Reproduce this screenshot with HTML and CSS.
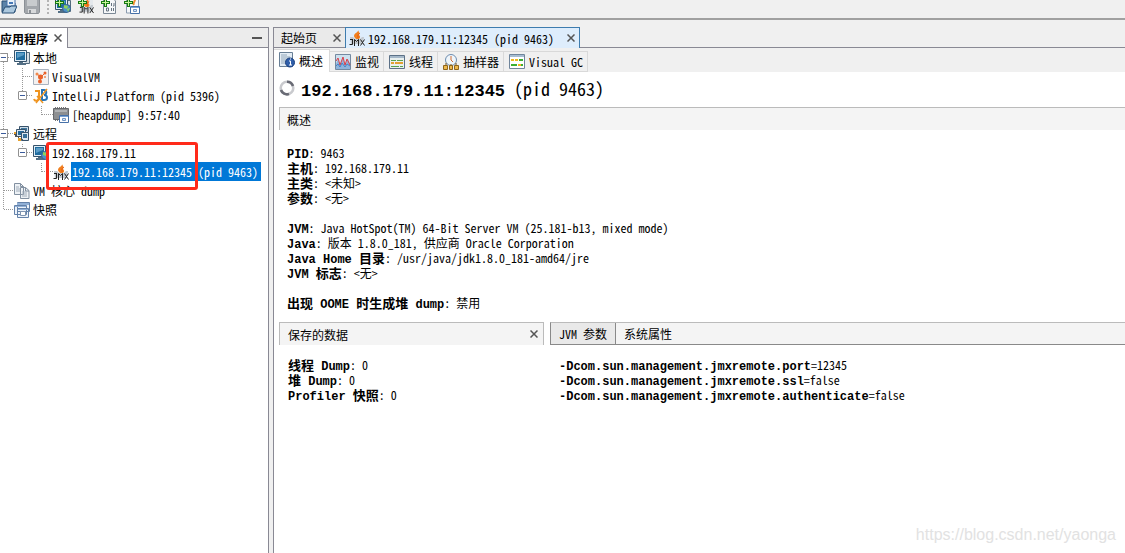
FILE: index.html
```html
<!DOCTYPE html>
<html lang="zh-CN">
<head>
<meta charset="utf-8">
<title>VisualVM</title>
<link rel="stylesheet" href="styles.css">
</head>
<body>
<svg class="defs" aria-hidden="true">
  <symbol id="plus" viewBox="0 0 9 9"><path d="M3 0h3v3h3v3H6v3H3V6H0V3h3z" fill="#167a13"/><path d="M4 1h1v3h3v1H5v3H4V5H1V4h3z" fill="#c8f59a"/></symbol>
  <symbol id="jmx" viewBox="0 0 16 16">
    <path d="M9 0c1 2-4 3-4 6 0 1 1 2 2 3h3c2-2 1-3 0-4 1-1 0-3-1-5z" fill="#f08020"/><path d="M11 3C8 5 9 6 9 8" stroke="#e85a10" fill="none"/>
    <path d="M1 7h3l2 2h5l2-2h2l-1 7H2z" fill="#c3c9cf"/>
    <path d="M.5 14.500h3V9M5.500 16V9.500l2 2 2-2V16M11.500 9.500l4 6m0-6l-4 6M1 9.500h2" stroke="#222" stroke-width="1" fill="none"/>
  </symbol>
  <symbol id="monitor" viewBox="0 0 16 16">
    <path d="M11.500 2.500h4v11h-5" fill="#d5dde4" stroke="#526a7d"/><path d="M.5.500h12v11H.5z" fill="#e1edf6" stroke="#36536b"/>
    <path d="M2 2h9v8H2z" fill="#1f6c9f"/><path d="M3 3h7v2L3 8z" fill="#5b9cc6"/><path d="M5 12h4v1h3v2H3v-2h2z" fill="#536f85"/>
  </symbol>
  <symbol id="globe" viewBox="0 0 9 9"><circle cx="4.500" cy="4.500" r="4" fill="#4e91c8" stroke="#39628a"/><path d="M2 1l4 1-1 3-3-1zM5 5l3-1-2 4z" fill="#8ed45b"/></symbol>
  <symbol id="window" viewBox="0 0 10 8"><path d="M.5.500h9v7h-9z" fill="#fff" stroke="#4771a8"/><path d="M1 1h8v1H1z" fill="#7ba4d5"/><path d="M3.500 3.500h3v2h-3z" fill="#dce9f8" stroke="#7194c3"/></symbol>
  <symbol id="remote" viewBox="0 0 16 16">
    <path d="M5.500.500h9v6h-9z" fill="#cddbe6" stroke="#38536b"/><path d="M7 2h6v3H7z" fill="#3d759c"/>
    <path d="M2.500 3.500h9v7h-9z" fill="#dce6ee" stroke="#38536b"/><path d="M4 5h6v4H4z" fill="#286b9a"/>
    <path d="M7.500 6.500h7v8h-7z" fill="#dce6ee" stroke="#38536b"/><path d="M9 8h4v4H9z" fill="#356f98"/><path d="M0 7h2v3h3v3h4v1H4v-3H1V9H0z" fill="#555"/><path d="M0 6h2v2H0zM4 12h3v3H4z" fill="#e6a02c"/>
  </symbol>
  <symbol id="docs" viewBox="0 0 16 16"><path d="M.5.500h6l3 3v8h-9zM6.500 4.500h5l3.500 3v8H6.500z" fill="#edf1f5" stroke="#8290a0"/><path d="M6.500.500v3h3M11.500 4.500v3.500H15" fill="none" stroke="#8290a0"/><path d="M2 4h3M2 6h4M2 8h4M8 9h5M8 11h5M8 13h5" stroke="#a1adba"/></symbol>
  <symbol id="snaps" viewBox="0 0 16 16"><path d="M3.500.500h12v9h-12zM.5 3.500h12v9H.500zM3.500 6.500h11v9h-11z" fill="#edf3fa" stroke="#6482aa"/><path d="M3 1h12v2H3zM1 4h11v1H1zM4 7h10v1H4z" fill="#91b0d6"/><path d="M6.500 9.500h5v4h-5z" fill="#fff" stroke="#7f94b0"/></symbol>
  <symbol id="chip" viewBox="0 0 16 16"><path d="M2.500 0v14M4.500 0v14M6.500 0v14M8.500 0v14M10.500 0v14M12.500 0v14" stroke="#777"/><path d="M.5 1.500h15v11H.5z" fill="#8d8f91" stroke="#66686b"/><path d="M2 3h12v2H2z" fill="#b0b2b4"/><use href="#window" x="6" y="8" width="10" height="8"/></symbol>
</svg>

<div class="app">
  <header class="toolbar">
    <button aria-label="打开"><svg viewBox="0 2 16 14"><path d="M1 3h6l2 2h5v9H1z" fill="#5c83a8" stroke="#294f75"/><path d="M6 0h8v8H6z" fill="#e9f2fa" stroke="#4771a8"/><path d="M8 4h4v2H8z" fill="#4678b7"/><path d="M1 15l3-6h5l1-1h6l-3 7z" fill="#acc8de" stroke="#294f75"/></svg></button>
    <button aria-label="保存" disabled><svg viewBox="0 2 16 14"><path d="M.5 0h15v14l-1 1.500h-13l-1-1z" fill="#a3a7ac" stroke="#8b9096"/><path d="M3 1h10v7H3z" fill="#c8cbce"/><path d="M4 11h8v4H4z" fill="#d7d9db"/><path d="M5 12h2v3H5z" fill="#8b9096"/></svg></button>
    <span class="grip"></span>
    <button aria-label="添加远程主机"><svg viewBox="0 2 16 14"><use href="#monitor" width="16" height="16"/><use href="#globe" x="7" y="6" width="9" height="9"/><use href="#plus" y="0" width="9" height="9"/></svg></button>
    <button aria-label="添加 JMX 连接"><svg viewBox="0 2 16 14"><path d="M2 1h13v12H2z" fill="#e4e8ec"/><use href="#jmx" x="1" width="15" height="16"/><use href="#plus" width="9" height="9"/></svg></button>
    <button aria-label="添加核心 dump"><svg viewBox="0 2 16 14"><path d="M2.500 0h9l3 3v12.500h-12z" fill="#f5f7f9" stroke="#7c8996"/><path d="M10.500 5v3M13 5v3h-1M5.500 10v3h2v-3h-2M10.500 10v3M12.500 10v3" stroke="#667380" fill="none"/><use href="#plus" width="9" height="9"/></svg></button>
    <button aria-label="添加快照"><svg viewBox="0 2 16 14"><path d="M2.500 0h12v15h-12z" fill="#f4f7fa" stroke="#8a9bae"/><path d="M10 0c3 3-2 4 0 7" stroke="#ee8d2c" stroke-width="2" fill="none"/><use href="#window" x="6" y="8" width="10" height="8"/><use href="#plus" width="9" height="9"/></svg></button>
  </header>

  <div class="workspace">
    <aside class="sidebar">
      <div class="side-head">
        <div class="side-tab"><b>应用程序</b><button class="close" aria-label="关闭"><svg viewBox="0 0 8 8"><path d="M.5.500l7 7m0-7l-7 7"/></svg></button></div>
        <button class="minimize" aria-label="最小化"></button>
      </div>
      <div class="tree">
        <svg class="guides" viewBox="0 0 60 171" aria-hidden="true"><path d="M3.500 10v152M22.500 20v28M22.500 96v9M41.500 58v9M41.500 115v9M4 9.500h10M23 28.500h10M23 47.500h10M42 66.500h11M4 85.500h10M23 104.500h10M42 123.500h11M4 142.500h10M4 161.500h10"/></svg>
        <ul>
          <li><button class="fold" aria-label="折叠"></button><svg class="ico"><use href="#monitor"/></svg><span>本地</span></li>
          <li class="leaf1"><svg class="ico" viewBox="0 0 16 16"><path d="M.5.500h15v15H.5z" fill="#f4f1f0" stroke="#a9b3bf"/><path d="M4 5l4 3 4-4M8 8l-1 4" stroke="#e9622a" fill="none"/><circle cx="7.500" cy="8" r="2.500" fill="#e9622a"/><circle cx="4" cy="5" r="1.500" fill="#f08a50"/><circle cx="12" cy="4" r="1.500" fill="#e9622a"/><circle cx="7" cy="12.500" r="2" fill="#e9622a"/><circle cx="12" cy="8" r="1" fill="#f08a50"/></svg><span>VisualVM</span></li>
          <li class="level1"><button class="fold" aria-label="折叠"></button><svg class="ico" viewBox="0 0 16 16"><path d="M2 3h4v6c0 4-4 5-5 2" stroke="#ef9521" stroke-width="2" fill="none"/><path d="M9 2v10h2c4 0 4-5 0-5 3 0 3-5 0-5z" stroke="#2875b8" stroke-width="2" fill="none"/><path d="M3 15L14 1M4 8l6 7" stroke="#ef9521" stroke-width="1.500"/></svg><span>IntelliJ Platform (pid 5396)</span></li>
          <li class="leaf2"><svg class="ico"><use href="#chip"/></svg><span>[heapdump] 9:57:40</span></li>
          <li><button class="fold" aria-label="折叠"></button><svg class="ico"><use href="#remote"/></svg><span>远程</span></li>
          <li class="level1"><button class="fold" aria-label="折叠"></button><svg class="ico" viewBox="0 0 16 16"><use href="#monitor"/><use href="#globe" x="8" y="6" width="9" height="9"/></svg><span>192.168.179.11</span></li>
          <li class="leaf2"><svg class="ico"><use href="#jmx"/></svg><span class="selected">192.168.179.11:12345 (pid 9463)</span></li>
          <li class="leaf0"><svg class="ico"><use href="#docs"/></svg><span>VM 核心 dump</span></li>
          <li class="leaf0"><svg class="ico"><use href="#snaps"/></svg><span>快照</span></li>
        </ul>
        <div class="highlight"></div>
      </div>
    </aside>

    <main class="content">
      <nav class="doc-tabs">
        <div class="doc-tab"><span>起始页</span><button class="close" aria-label="关闭"><svg viewBox="0 0 8 8"><path d="M.5.500l7 7m0-7l-7 7"/></svg></button></div>
        <div class="doc-tab active"><svg class="ico"><use href="#jmx"/></svg><span>192.168.179.11:12345 (pid 9463)</span><button class="close" aria-label="关闭"><svg viewBox="0 0 8 8"><path d="M.5.500l7 7m0-7l-7 7"/></svg></button></div>
      </nav>
      <nav class="view-tabs">
        <button class="current"><svg class="ico" viewBox="0 0 16 16"><path d="M.5.500h13v14H.5z" fill="#e4edf5" stroke="#687f96"/><path d="M2 3h6M2 5h9M2 7h7M2 9h5M2 11h4" stroke="#91a6b9"/><circle cx="11" cy="10.500" r="4.500" fill="#305faa" stroke="#183e7d"/><path d="M10 9h1.500v4M10 13h3M11 7h1" stroke="#fff" fill="none"/></svg>概述</button>
        <button><svg class="ico" viewBox="0 0 16 16"><path d="M.5.500h15v15H.5z" fill="#cde1ef" stroke="#7489a0"/><path d="M1 10l2-5 2 6 3-7 2 7 3-6 2 5v5H1z" fill="#8fb4dc"/><path d="M1 7l2-3 2 7 3-8 2 8 2-6 3 6" stroke="#dc3e48" fill="none"/><path d="M1 12l2-2 2 3 2-4 3 4 2-3 3 2" stroke="#4b82c4" fill="none"/></svg>监视</button>
        <button><svg class="ico" viewBox="0 0 16 16"><path d="M.5 1.500h15v13H.5z" fill="#e9f0ef" stroke="#5c7187"/><path d="M1 2h14v2H1z" fill="#a5b8c9"/><path d="M2 6.500h5m1 0h6" stroke="#5aa34f"/><path d="M2 9h3m1 0h8" stroke="#e2a133" stroke-width="2"/><path d="M2 12.500h8m1 0h3" stroke="#5aa34f"/></svg>线程</button>
        <button><svg class="ico" viewBox="0 0 16 16"><circle cx="8" cy="6" r="5.500" fill="#eef5fb" stroke="#6d8cae"/><path d="M8 2v4l2 2" stroke="#d26c33" fill="none"/><path d="M8 10v2M3 12V9M13 12V9" stroke="#70511c"/><path d="M.5 11.500h4v4h-4zM6.500 11.500h3v4h-3zM11.500 11.500h4v4h-4z" fill="#edb84c" stroke="#8e651b"/></svg>抽样器</button>
        <button><svg class="ico" viewBox="0 0 16 16"><path d="M.5.500h15v14H.5z" fill="#fff" stroke="#70859b"/><path d="M1 1h14v2H1z" fill="#a6bdd2"/><path d="M2 6h3m1 0h3" stroke="#efb91f" stroke-width="2"/><path d="M10 6h4" stroke="#3caf32" stroke-width="2"/><path d="M2 11h6m4 0h2" stroke="#3caf32" stroke-width="2"/><path d="M9 11h3" stroke="#efb91f" stroke-width="2"/></svg>Visual GC</button>
      </nav>

      <div class="page">
        <h1><svg class="ico" viewBox="0 0 16 16"><circle cx="8" cy="8" r="6.300" fill="none" stroke="#c9cace" stroke-width="2.600"/><path d="M2 10A6.300 6.300 0 0 0 10 14M8 1.700A6.300 6.300 0 0 1 14 6" fill="none" stroke="#696b75" stroke-width="2.600"/></svg><span><b>192.168.179.11:12345</b> (pid 9463)</span></h1>
        <h2 class="bar">概述</h2>
        <div class="details">
          <p><b>PID</b>: 9463</p>
          <p><b class="zh">主机</b>: 192.168.179.11</p>
          <p><b class="zh">主类</b>: &lt;未知&gt;</p>
          <p><b class="zh">参数</b>: &lt;无&gt;</p>
          <p class="space"><b>JVM</b>: Java HotSpot(TM) 64-Bit Server VM (25.181-b13, mixed mode)</p>
          <p><b>Java</b>: 版本 1.8.0_181, 供应商 Oracle Corporation</p>
          <p><b>Java Home <span class="zh">目录</span></b>: /usr/java/jdk1.8.0_181-amd64/jre</p>
          <p><b>JVM <span class="zh">标志</span></b>: &lt;无&gt;</p>
          <p class="space"><b><span class="zh">出现</span> OOME <span class="zh">时生成堆</span> dump</b>: 禁用</p>
        </div>
        <div class="split">
          <section class="saved">
            <h2 class="bar">保存的数据<button class="close" aria-label="关闭"><svg viewBox="0 0 8 8"><path d="M.5.500l7 7m0-7l-7 7"/></svg></button></h2>
            <div class="lines">
              <p><b><span class="zh">线程</span> Dump</b>: 0</p>
              <p><b><span class="zh">堆</span> Dump</b>: 0</p>
              <p><b>Profiler <span class="zh">快照</span></b>: 0</p>
            </div>
          </section>
          <section class="jvm">
            <div class="bar tabs"><button class="on">JVM 参数</button><button>系统属性</button></div>
            <div class="lines">
              <p><b>-Dcom.sun.management.jmxremote.port</b>=12345</p>
              <p><b>-Dcom.sun.management.jmxremote.ssl</b>=false</p>
              <p><b>-Dcom.sun.management.jmxremote.authenticate</b>=false</p>
            </div>
          </section>
        </div>
      </div>
    </main>
  </div>
  <div class="watermark">https://blog.csdn.net/yaonga</div>
</div>
</body>
</html>
```
FILE: styles.css
```css
* { box-sizing: border-box; }
body, h1, h2, p, ul { margin: 0; padding: 0; }
body, button {
  font-family: "Noto Sans CJK SC", "Liberation Mono", monospace;
  font-size: 12px;
  line-height: 15px;
  font-feature-settings: "hwid";
  font-kerning: none;
  color: #000;
}
button { border: 0; padding: 0; background: none; }
.defs { position: absolute; width: 0; height: 0; }
.ico { width: 16px; height: 16px; flex: none; }
.app { position: relative; display: flex; flex-direction: column; min-height: 100vh; background: #f0f0f0; }

.toolbar { display: flex; gap: 7px; height: 20px; padding-left: 1px; border-bottom: 2px solid #a0a0a0; }
.toolbar button { height: 14px; }
.toolbar svg { display: block; width: 16px; height: 14px; }
.grip { width: 2px; height: 14px; margin: 0 -1px 0 0; border-left: 2px dotted #b4b4b4; }

.workspace { display: flex; flex: 1; gap: 4px; padding-top: 7px; }
.sidebar { display: flex; flex-direction: column; width: 269px; flex: none; background: #fff; border-right: 1px solid #898994; border-top: 1px solid #898994; }
.side-head { display: flex; justify-content: space-between; height: 20px; background: #ececec; }
.side-tab { display: flex; align-items: center; gap: 6px; padding-right: 5px; background: #fff; border-right: 1px solid #898994; }
.minimize { flex: 1; border-bottom: 1px solid #898994; display: flex; align-items: center; justify-content: flex-end; padding-right: 6px; }
.minimize::before { content: ""; width: 10px; height: 2px; background: #555; }
.close { display: flex; }
.close svg { width: 8px; height: 8px; stroke: #555; stroke-width: 1.5; fill: none; }

.tree { position: relative; }
.guides { position: absolute; left: 0; top: 0; width: 60px; height: 171px; fill: none; stroke: #999; stroke-dasharray: 1 1; }
.tree ul { position: relative; list-style: none; }
.tree li { display: flex; align-items: center; height: 19px; padding-left: 0; white-space: nowrap; }
.tree li.level1 { padding-left: 18px; }
.tree li.leaf0 { padding-left: 14px; }
.tree li.leaf1 { padding-left: 33px; }
.tree li.leaf2 { padding-left: 53px; }
.tree span { padding-left: 3px; line-height: 19px; }
.tree .selected { margin-left: 2px; padding: 0 3px 0 1px; background: #0078d7; color: #fff; }
.fold { display: flex; align-items: center; justify-content: center; width: 9px; height: 9px; margin-right: 6px; border: 1px solid #919191; border-radius: 1px; background: #fff; }
.tree li:not([class]) .fold { width: 8px; border-left: 0; }
.fold::before { content: ""; width: 5px; height: 1px; background: #3b5b9b; }
.highlight { position: absolute; left: 46px; top: 94px; width: 152px; height: 48px; border: 3px solid #ff2a1a; border-radius: 3px; }

.content { display: flex; flex-direction: column; flex: 1; min-width: 0; border-left: 1px solid #898994; background: #fff; }
.doc-tabs { display: flex; height: 21px; background: #f0f0f0; border-top: 1px solid #f0f0f0; border-bottom: 1px solid #898994; }
.doc-tab { display: flex; align-items: center; gap: 16px; height: 20px; margin-top: -1px; padding: 0 4px 0 7px; border-top: 1px solid #898994; background: #eaeaea; }
.doc-tab.active { gap: 3px; height: 21px; padding-left: 3px; background: #deedfc; border: 1px solid #3e7cae; border-bottom: 0; }
.doc-tab.active .close { margin-left: 10px; }
.view-tabs { display: flex; align-items: flex-end; height: 24px; background: #f0f0f0; }
.view-tabs button { display: flex; align-items: center; gap: 4px; height: 21px; padding: 0 4px 0 5px; border: 1px solid #d9d9d9; border-left: 0; white-space: nowrap; }
.view-tabs .current { height: 23px; padding: 0 6px 2px 5px; border-bottom: 0; background: #fff; }

.page { padding-left: 5px; }
h1 { display: flex; align-items: center; gap: 6px; height: 35px; font-size: 18px; line-height: 24px; font-weight: 400; white-space: nowrap; }
h1 b { font-family: "Liberation Mono", "Noto Sans CJK SC", monospace; font-size: 17px; }
h1 .ico { margin-bottom: 4px; }
.bar { display: flex; align-items: center; height: 23px; padding-left: 7px; font-size: 12px; font-weight: 400; background: #f4f4f4; border-top: 1px solid #bbb; border-left: 1px solid #bbb; }
.details { padding: 15px 8px 12px; }
.details p, .lines p { height: 15px; white-space: nowrap; }
.details .space { margin-top: 15px; }
.details b, .lines b { font-family: "Liberation Mono", "Noto Sans CJK SC", monospace; font-size: 12px; }
.details .zh, .lines .zh { font-size: 13px; }
.split { display: flex; gap: 6px; }
.saved { width: 265px; flex: none; }
.saved .bar { justify-content: space-between; padding: 0 5px 0 8px; border-right: 1px solid #bbb; }
.jvm { flex: 1; min-width: 0; }
.bar.tabs { align-items: stretch; padding: 0; border-left-color: #898989; border-bottom: 1px solid #898989; }
.tabs button { padding: 0 8px; }
.tabs .on { background: #e9e9e9; border-right: 1px solid #898989; }
.lines { padding: 12px 9px; }
.watermark { position: absolute; right: 9px; bottom: 8px; font: 16px/20px "Liberation Sans", Arial, sans-serif; color: #e2e2e2; }
```
